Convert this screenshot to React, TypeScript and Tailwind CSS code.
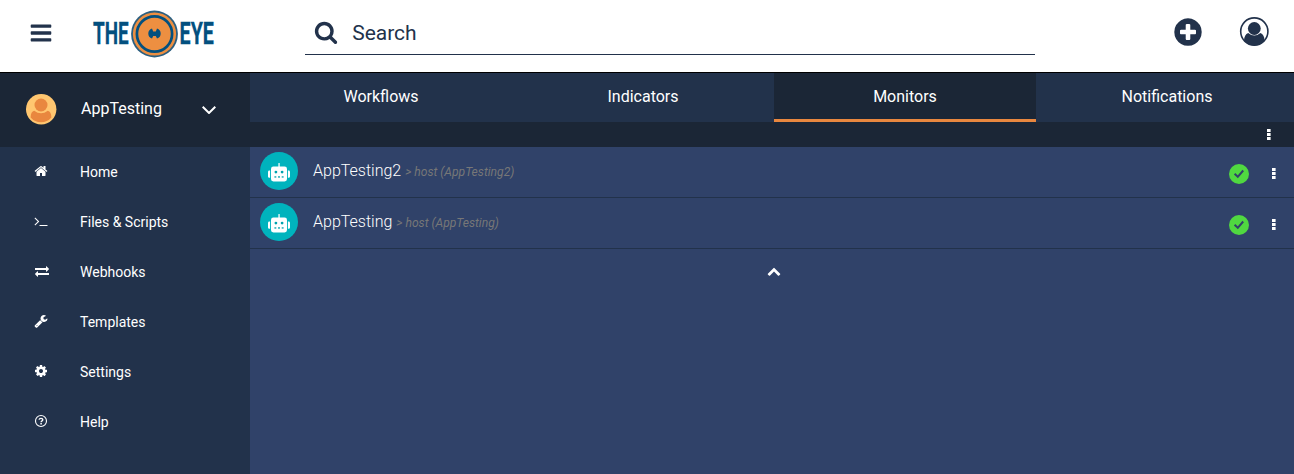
import React from "react";

const paths = {
  bars: "M1664 1344v128q0 26-19 45t-45 19h-1408q-26 0-45-19t-19-45v-128q0-26 19-45t45-19h1408q26 0 45 19t19 45zm0-512v128q0 26-19 45t-45 19h-1408q-26 0-45-19t-19-45v-128q0-26 19-45t45-19h1408q26 0 45 19t19 45zm0-512v128q0 26-19 45t-45 19h-1408q-26 0-45-19t-19-45v-128q0-26 19-45t45-19h1408q26 0 45 19t19 45z",
  search: "M1216 832q0-185-131.5-316.5t-316.5-131.5-316.5 131.5-131.5 316.5 131.5 316.5 316.5 131.5 316.5-131.5 131.5-316.5zm512 832q0 52-38 90t-90 38q-54 0-90-38l-343-342q-179 124-399 124-143 0-273.5-55.5t-225-150-150-225-55.5-273.5 55.5-273.5 150-225 225-150 273.5-55.5 273.5 55.5 225 150 150 225 55.5 273.5q0 220-124 399l343 343q37 37 37 90z",
  plus: "M1344 960v-128q0-26-19-45t-45-19h-256v-256q0-26-19-45t-45-19h-128q-26 0-45 19t-19 45v256h-256q-26 0-45 19t-19 45v128q0 26 19 45t45 19h256v256q0 26 19 45t45 19h128q26 0 45-19t19-45v-256h256q26 0 45-19t19-45zm320-64q0 209-103 385.5t-279.5 279.5-385.5 103-385.5-103-279.5-279.5-103-385.5 103-385.5 279.5-279.5 385.5-103 385.5 103 279.5 279.5 103 385.5z",
  home: "M1472 992v480q0 26-19 45t-45 19h-384v-384h-256v384h-384q-26 0-45-19t-19-45v-480q0-1 .5-3t.5-3l575-474 575 474q1 2 1 6zm223-69l-62 74q-8 9-21 11h-3q-13 0-21-7l-692-577-692 577q-12 8-24 7-13-2-21-11l-62-74q-8-10-7-23.5t11-21.5l719-599q32-26 76-26t76 26l244 204v-195q0-14 9-23t23-9h192q14 0 23 9t9 23v408l219 182q10 8 11 21.5t-7 23.5z",
  terminal: "M649 983l-466 466q-10 10-23 10t-23-10l-50-50q-10-10-10-23t10-23l393-393-393-393q-10-10-10-23t10-23l50-50q10-10 23-10t23 10l466 466q10 10 10 23t-10 23zm1079 457v64q0 14-9 23t-23 9h-960q-14 0-23-9t-9-23v-64q0-14 9-23t23-9h960q14 0 23 9t9 23z",
  exchange: "M1792 1184v192q0 13-9.5 22.5t-22.5 9.5h-1376v192q0 13-9.5 22.5t-22.5 9.5q-12 0-24-10l-319-320q-9-9-9-22 0-14 9-23l320-320q9-9 23-9 13 0 22.5 9.5t9.5 22.5v192h1376q13 0 22.5 9.5t9.5 22.5zm0-544q0 14-9 23l-320 320q-9 9-23 9-13 0-22.5-9.5t-9.5-22.5v-192h-1376q-13 0-22.5-9.5t-9.5-22.5v-192q0-13 9.5-22.5t22.5-9.5h1376v-192q0-14 9-23t23-9q12 0 24 10l319 319q9 9 9 23z",
  wrench: "M448 1472q0-26-19-45t-45-19-45 19-19 45 19 45 45 19 45-19 19-45zm644-420l-682 682q-37 37-90 37-52 0-91-37l-106-108q-38-36-38-90 0-53 38-91l681-681q39 98 114.5 173.5t173.5 114.5zm634-435q0 39-23 106-47 134-164.5 217.5t-258.5 83.5q-185 0-316.5-131.5t-131.5-316.5 131.5-316.5 316.5-131.5q58 0 121.5 16.5t107.5 46.5q16 11 16 28t-16 28l-293 169v224l193 107q5-3 79-48.5t135.5-81 70.5-35.5q15 0 23.5 10t8.5 25z",
  cog: "M1152 896q0-106-75-181t-181-75-181 75-75 181 75 181 181 75 181-75 75-181zm512-109v222q0 12-8 23t-20 13l-185 28q-19 54-39 91 35 50 107 138 10 12 10 25t-9 23q-27 37-99 108t-94 71q-12 0-26-9l-138-108q-44 23-91 38-16 136-29 186-7 28-36 28h-222q-14 0-24.5-8.5t-11.5-21.5l-28-184q-49-16-90-37l-141 107q-10 9-25 9-14 0-25-11-126-114-165-168-7-10-7-23 0-12 8-23 15-21 51-66.5t54-70.5q-27-50-41-99l-183-27q-13-2-21-12.5t-8-23.5v-222q0-12 8-23t19-13l186-28q14-46 39-92-40-57-107-138-10-12-10-24 0-10 9-23 26-36 98.5-107.5t94.5-71.5q13 0 26 10l138 107q44-23 91-38 16-136 29-186 7-28 36-28h222q14 0 24.5 8.5t11.5 21.5l28 184q49 16 90 37l142-107q9-9 24-9 13 0 25 10 129 119 165 170 7 8 7 22 0 12-8 23-15 21-51 66.5t-54 70.5q26 50 41 98l183 28q13 2 21 12.5t8 23.5z",
  chevronUp: "M1683 1331l-166 165q-19 19-45 19t-45-19l-531-531-531 531q-19 19-45 19t-45-19l-166-165q-19-19-19-45.5t19-45.5l742-741q19-19 45-19t45 19l742 741q19 19 19 45.5t-19 45.5z",
};

function Icon({ name, className }: { name: keyof typeof paths; className: string }) {
  return (
    <svg viewBox="0 0 1792 1792" fill="currentColor" className={className}>
      <path d={paths[name]} />
    </svg>
  );
}

function Logo() {
  return (
    <svg viewBox="0 0 132 58" className="h-[58px] w-[132px] overflow-visible">
      <g fill="#03507f" stroke="#03507f" strokeWidth="0.3" fontFamily="Roboto, sans-serif" fontWeight="700" fontSize="31">
        <text transform="translate(5 39) scale(0.61 1)">THE</text>
        <text transform="translate(91.6 39) scale(0.635 1)">EYE</text>
      </g>
      <circle cx="66.5" cy="29" r="23.4" fill="#2c5f80" />
      <circle cx="66.5" cy="29" r="21.6" fill="#ed8f41" />
      <circle cx="66.5" cy="29" r="17.6" fill="none" stroke="#03507f" strokeWidth="2.7" />
      <path
        d="M64 23.6 Q60.3 25 60.3 28.6 Q60.3 32.4 64 33.6 L65.2 30.9 H67.8 L69 33.6 Q72.7 32.4 72.7 28.6 Q72.7 25 69 23.6 L67.8 26.6 H65.2Z"
        fill="#03507f"
      />
    </svg>
  );
}

function Dots() {
  return (
    <svg viewBox="0 0 4 11" fill="#fff" className="h-[11px] w-1">
      <rect x="0" y="0" width="3.6" height="3" />
      <rect x="0" y="4" width="3.6" height="3" />
      <rect x="0" y="8" width="3.6" height="3" />
    </svg>
  );
}

function Robot() {
  return (
    <svg viewBox="0 0 22 19" className="mt-0.5 h-[19px] w-[22px]">
      <g fill="#fff">
        <rect x="10.4" y="0" width="1.3" height="5" rx="0.6" />
        <rect x="3" y="3.6" width="16" height="14.8" rx="2.4" />
        <path d="M2.1 7.6V14.8H1.4Q0 14.8 0 13.4V9Q0 7.6 1.4 7.6ZM19.9 7.6V14.8H20.6Q22 14.8 22 13.4V9Q22 7.6 20.6 7.6Z" />
      </g>
      <g fill="#00a3ae">
        <circle cx="7.9" cy="9.1" r="1.4" />
        <circle cx="14.1" cy="9.1" r="1.4" />
        <rect x="6.4" y="13.3" width="1.9" height="1.3" />
        <rect x="10" y="13.3" width="2" height="1.3" />
        <rect x="13.7" y="13.3" width="1.9" height="1.3" />
      </g>
    </svg>
  );
}

function Help() {
  return (
    <svg viewBox="0 0 14 14" className="size-3.5" fill="none" stroke="#fff">
      <circle cx="7" cy="7" r="5.5" strokeWidth="1.1" />
      <path d="M5 5.6Q5.4 4.4 7 4.4Q8.8 4.4 8.8 5.8Q8.8 6.6 7.8 7.1Q7.1 7.5 7.1 8.3" strokeWidth="1.4" />
      <path d="M7.1 9V10.4" strokeWidth="1.5" />
    </svg>
  );
}

const menu: { label: string; icon: React.ReactNode }[] = [
  { label: "Home", icon: <Icon name="home" className="size-3.5" /> },
  { label: "Files & Scripts", icon: <Icon name="terminal" className="size-3.5" /> },
  { label: "Webhooks", icon: <Icon name="exchange" className="ml-px size-3.5" /> },
  { label: "Templates", icon: <Icon name="wrench" className="size-3.5" /> },
  { label: "Settings", icon: <Icon name="cog" className="size-3.5" /> },
  { label: "Help", icon: <Help /> },
];

const tabs = ["Workflows", "Indicators", "Monitors", "Notifications"];

const monitors = [
  { name: "AppTesting2", host: "AppTesting2" },
  { name: "AppTesting", host: "AppTesting" },
];

function Header() {
  return (
    <header className="flex h-[73px] shrink-0 border-b border-black bg-white text-[#22324b]">
      <Icon name="bars" className="mt-[21px] ml-[29.3px] size-6 shrink-0" />
      <div className="mt-[5px] ml-[34.7px] shrink-0">
        <Logo />
      </div>
      <div className="ml-[85px] flex h-[55px] w-[730px] shrink-0 border-b border-[#22324b] pt-5">
        <Icon name="search" className="-mt-[0.5px] ml-[8.7px] size-6" />
        <span className="ml-[14.5px] text-[21px] leading-[26px]">Search</span>
      </div>
      <Icon name="plus" className="mt-4 ml-[137.2px] size-8 shrink-0" />
      <svg viewBox="0 0 30 30" className="mt-4 ml-[35px] size-[30px] shrink-0">
        <circle cx="15.3" cy="15.5" r="13.6" fill="none" stroke="currentColor" strokeWidth="1.6" />
        <circle cx="15.3" cy="12.5" r="6.4" fill="currentColor" />
        <path d="M5 24.8Q5.2 18.4 9.2 17Q15.3 22.2 21.4 17Q25.4 18.4 25.6 24.8Q21.5 29.4 15.3 29.4T5 24.8Z" fill="currentColor" />
      </svg>
    </header>
  );
}

function Sidebar() {
  return (
    <aside className="w-[250px] shrink-0 bg-[#22324b]">
      <div className="flex h-[74px] items-center bg-[#1b2636] pb-0.5">
        <svg viewBox="0 0 31 31" className="ml-[25.5px] size-[31px]">
          <circle cx="15.2" cy="15.2" r="15.2" fill="#ffc670" />
          <circle cx="15" cy="11" r="6.5" fill="#e9873f" />
          <path d="M4.6 23.5Q4.8 17.6 8.2 16.8Q15 21.8 21.8 16.8Q25.2 17.6 25.4 23.5Q21.3 28.3 15 28.3T4.6 23.5Z" fill="#e9873f" />
        </svg>
        <span className="ml-[24.5px] w-[121px] text-base">AppTesting</span>
        <svg viewBox="0 0 14 8" className="mt-0.5 h-2 w-3.5" fill="none" stroke="#fff" strokeWidth="2">
          <path d="M0.7 0.8L7 7L13.3 0.8" />
        </svg>
      </div>
      <nav>
        {menu.map((item) => (
          <a key={item.label} className="flex h-[50px] items-center text-sm">
            <span className="ml-[34px] flex w-[46px] pb-0.5">{item.icon}</span>
            <span>{item.label}</span>
          </a>
        ))}
      </nav>
    </aside>
  );
}

export default function App() {
  return (
    <div className="flex h-[474px] w-full flex-col overflow-hidden font-[Roboto,sans-serif] text-white">
      <Header />
      <div className="flex min-h-0 flex-1">
        <Sidebar />
        <main className="min-w-0 flex-1 overflow-hidden bg-[#304269]">
          <div className="w-[1048px]">
            <div className="flex h-[49px] bg-[#22324b]">
              {tabs.map((tab) => (
                <div
                  key={tab}
                  className={
                    tab === "Monitors"
                      ? "flex flex-1 justify-center border-b-3 border-[#e9873f] bg-[#1b2636] pt-3 text-base"
                      : "flex flex-1 justify-center pt-3 text-base"
                  }
                >
                  {tab}
                </div>
              ))}
            </div>
            <div className="flex h-[25px] items-center justify-end bg-[#1b2636] pr-[27px]">
              <Dots />
            </div>
            {monitors.map((m) => (
              <div key={m.name} className="flex h-[51px] items-center border-b border-[#22324b] pl-2.5">
                <span className="mb-0.5 flex size-[38px] items-center justify-center rounded-full bg-[#00b3bd]">
                  <Robot />
                </span>
                <span className="mb-0.5 ml-[15px] text-base font-light">{m.name}</span>
                <span className="mt-px ml-1 flex-1 text-[12.1px] text-[#777777] italic">&gt; host ({m.host})</span>
                <svg viewBox="0 0 20 20" className="mt-[3px] size-5">
                  <circle cx="10" cy="10" r="10" fill="#50d840" />
                  <path d="M5.6 9.8L8.8 12.8L14.2 6.5" fill="none" stroke="#304269" strokeWidth="2" />
                </svg>
                <span className="mt-[3px] mr-[22px] ml-[23px] flex">
                  <Dots />
                </span>
              </div>
            ))}
            <div className="flex justify-center pt-[15px]">
              <Icon name="chevronUp" className="size-3.5" />
            </div>
          </div>
        </main>
      </div>
    </div>
  );
}
